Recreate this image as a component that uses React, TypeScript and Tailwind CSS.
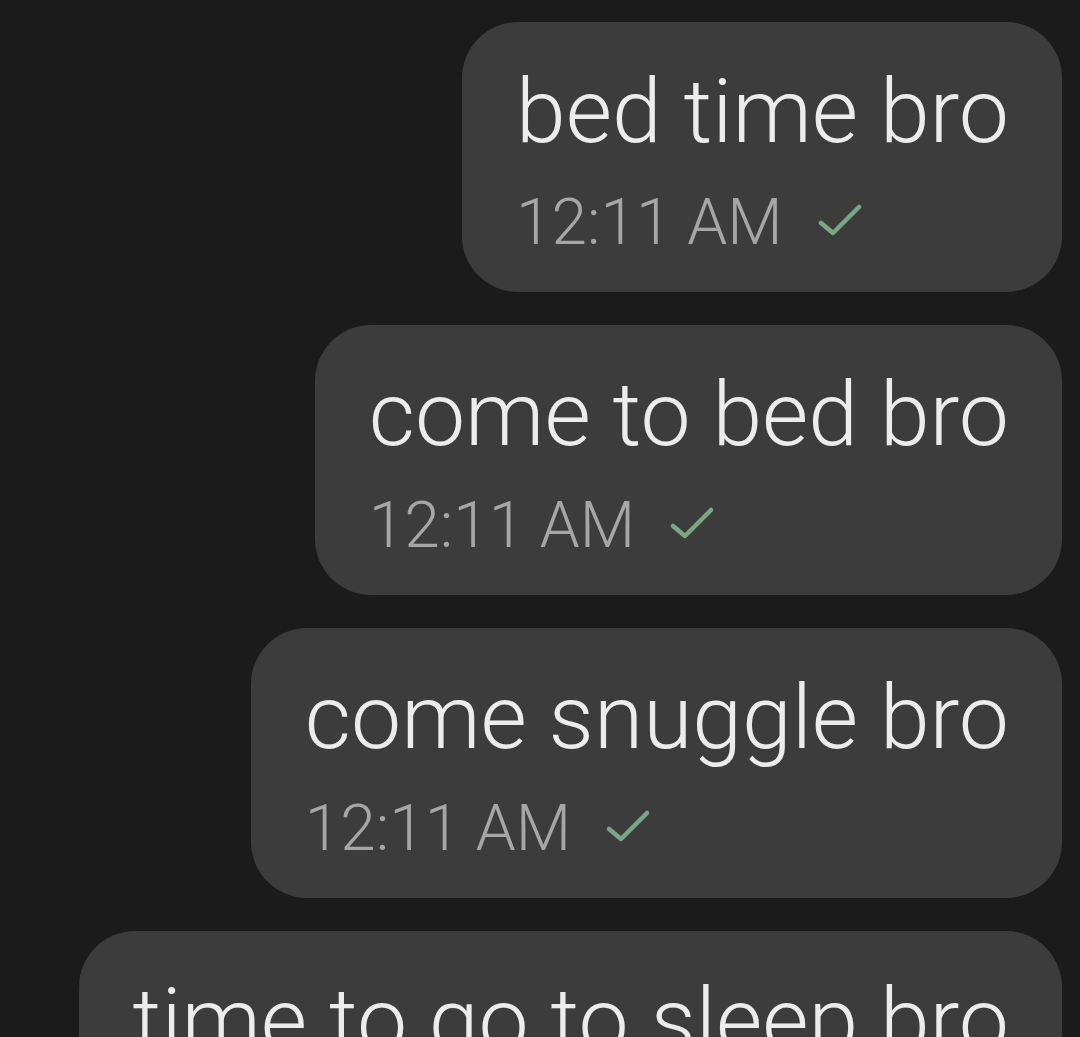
const messages = [
  { id: 1, text: "bed time bro", time: "12:11 AM" },
  { id: 2, text: "come to bed bro", time: "12:11 AM" },
  { id: 3, text: "come snuggle bro", time: "12:11 AM" },
  { id: 4, text: "time to go to sleep bro", time: "12:11 AM" },
];

function SentCheck() {
  return (
    <svg width="46" height="34" viewBox="0 0 46 34" className="ml-[34px] mb-[21px]" fill="none">
      <polyline points="4,19 16,29 42,3" stroke="#79a883" strokeWidth="4.5" strokeLinecap="round" strokeLinejoin="round" />
    </svg>
  );
}

function Bubble({ text, time }: { text: string; time: string }) {
  return (
    <div className="flex flex-col rounded-[56px] bg-[#3c3c3c] pl-[54px] pr-[53px] pt-[40px] pb-[33px]">
      <p className="whitespace-nowrap text-[89.5px] font-light leading-[100px] text-[#ececec]">{text}</p>
      <div className="mt-[25px] flex items-end">
        <span className="text-[64px] font-light leading-[72px] text-[#a6a6a6]">{time}</span>
        <SentCheck />
      </div>
    </div>
  );
}

export default function App() {
  return (
    <div className="h-[1037px] w-[1080px] overflow-hidden bg-[#1b1b1b] font-['Roboto','Noto_Sans',sans-serif]">
      <div className="flex flex-col items-end gap-[33px] pt-[22px] pr-[18px]">
        {messages.map((m) => (
          <Bubble key={m.id} text={m.text} time={m.time} />
        ))}
      </div>
    </div>
  );
}
